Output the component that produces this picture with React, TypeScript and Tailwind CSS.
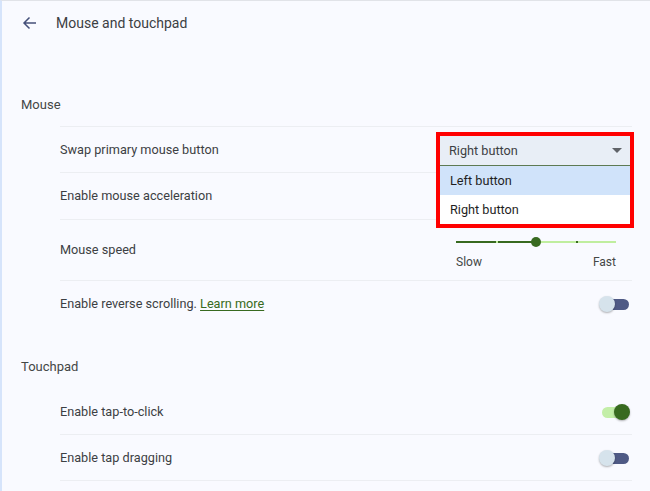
import React from "react";

const font = { fontFamily: "Roboto, 'Noto Sans', Arial, sans-serif" };

function Toggle({ on }: { on: boolean }) {
  return (
    <div className="relative h-[16px] w-[32px]">
      <div
        className={`absolute top-[3px] h-[11px] rounded-full ${
          on ? "left-[4px] right-[4px] bg-[#c3eea8]" : "left-[4px] right-[1px] bg-[#4f5a85]"
        }`}
      />
      <div
        className={`absolute top-0 h-[16px] w-[16px] rounded-full shadow-[0_1px_2px_rgba(0,0,0,0.3)] ${
          on ? "right-0 bg-[#386a20]" : "left-[1px] bg-[#d6e3ec]"
        }`}
      />
    </div>
  );
}

function Row({
  label,
  children,
  className = "",
}: {
  label: React.ReactNode;
  children?: React.ReactNode;
  className?: string;
}) {
  return (
    <div className={`flex items-center justify-between pr-[2px] ${className}`}>
      <div className="text-[12.7px] text-[#3c4043]">{label}</div>
      {children}
    </div>
  );
}

function SpeedSlider() {
  return (
    <div className="mr-[14px] flex w-[160px] flex-col pt-[7px]">
      <div className="relative h-[10px]">
        <div className="absolute left-0 top-[4px] h-[2px] w-[80px] bg-[#386a20]" />
        <div className="absolute left-[80px] top-[4px] h-[2px] w-[80px] bg-[#c0ee9f]" />
        <div className="absolute left-[40px] top-[4px] h-[2px] w-[2px] bg-[#c0ee9f]" />
        <div className="absolute left-[120px] top-[4px] h-[2px] w-[2px] bg-[#386a20]" />
        <div className="absolute left-[75px] top-0 h-[10px] w-[10px] rounded-full bg-[#386a20]" />
      </div>
      <div className="mt-[6px] flex justify-between text-[12px] text-[#444746]">
        <span>Slow</span>
        <span>Fast</span>
      </div>
    </div>
  );
}

function SwapSelect() {
  return (
    <div className="relative mt-[3px] h-[30px] w-[190px]">
      <div className="flex h-[30px] items-center justify-between border-b border-[#5d7a52] bg-[#e8eef6] pl-[9px] pr-[8px] text-[12.7px] text-[#3c4043]">
        <span>Right button</span>
        <svg width="10" height="5" viewBox="0 0 10 5">
          <path d="M0 0h10L5 5z" fill="#5f6368" />
        </svg>
      </div>
      <div className="absolute left-0 top-[30px] z-10 w-[190px] bg-white text-[12.7px] text-[#1f1f1f]">
        <div className="flex h-[29px] items-center bg-[#d0e3fa] pl-[10px]">Left button</div>
        <div className="flex h-[29px] items-center pl-[10px]">Right button</div>
      </div>
      <div className="pointer-events-none absolute -left-[4px] -top-[4px] z-20 h-[96px] w-[198px] border-4 border-[#ff0000]" />
    </div>
  );
}

export default function App() {
  return (
    <div
      className="h-[491px] w-[650px] overflow-hidden border-l-2 border-t border-l-[#d6e4fb] border-t-[#e1e3e8] bg-[#f9faff]"
      style={font}
    >
      <div className="flex h-[44px] items-center pl-[20px]">
        <svg width="16" height="16" viewBox="0 0 16 16" className="text-[#45507a]">
          <path
            d="M14 8H2.5M7.5 2.5 2 8l5.5 5.5"
            fill="none"
            stroke="currentColor"
            strokeWidth="1.5"
          />
        </svg>
        <div className="ml-[18px] text-[14px] text-[#3c4043]">Mouse and touchpad</div>
      </div>

      <div className="mt-[38px] pr-[18px]">
        <div className="flex h-[43px] items-center pl-[19px] text-[13px] text-[#444746]">Mouse</div>
        <div className="ml-[58px]">
          <Row label="Swap primary mouse button" className="h-[46px] border-t border-[#eceef2]">
            <SwapSelect />
          </Row>
          <Row label="Enable mouse acceleration" className="h-[47px] border-t border-[#eceef2]" />
          <Row label="Mouse speed" className="h-[61px] border-t border-[#eceef2]">
            <SpeedSlider />
          </Row>
          <Row
            label={
              <>
                Enable reverse scrolling.{" "}
                <span className="text-[#386a20] underline underline-offset-2">Learn more</span>
              </>
            }
            className="h-[46px] border-t border-[#eceef2]"
          >
            <Toggle on={false} />
          </Row>
        </div>

        <div className="mt-[19px] flex h-[44px] items-center pl-[19px] text-[13px] text-[#444746]">
          Touchpad
        </div>
        <div className="ml-[58px]">
          <Row label="Enable tap-to-click" className="h-[46px] border-b border-[#eceef2]">
            <Toggle on={true} />
          </Row>
          <Row label="Enable tap dragging" className="h-[46px] border-b border-[#eceef2]">
            <Toggle on={false} />
          </Row>
        </div>
      </div>
    </div>
  );
}
